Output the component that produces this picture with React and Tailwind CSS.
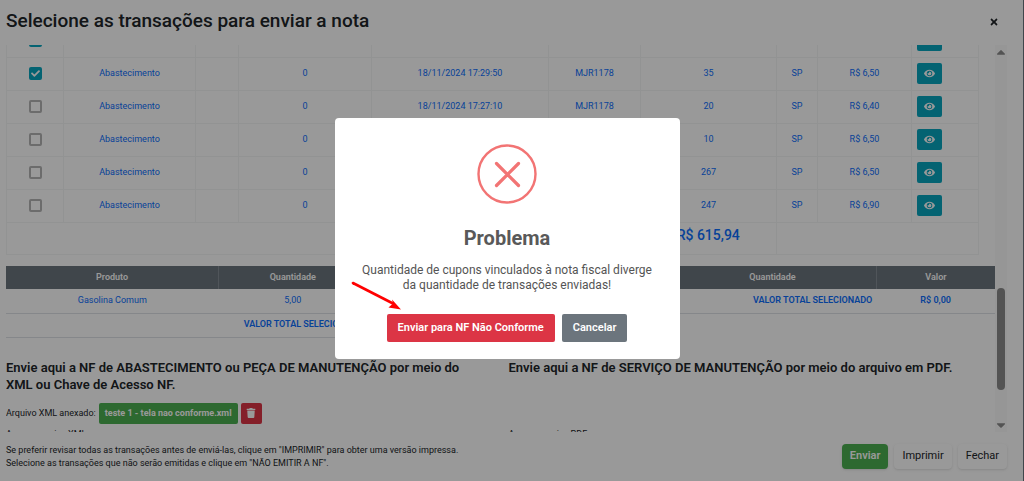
import React from 'react';
import { FaEye, FaTrash, FaCheck, FaTimes, FaCaretUp, FaCaretDown } from 'react-icons/fa';

const transactions = [
    { checked: true, type: '', quantity: '', date: '', plate: '', litres: '', state: '', price: '' },
    { checked: true, type: 'Abastecimento', quantity: '0', date: '18/11/2024 17:29:50', plate: 'MJR1178', litres: '35', state: 'SP', price: 'R$ 6,50' },
    { checked: false, type: 'Abastecimento', quantity: '0', date: '18/11/2024 17:27:10', plate: 'MJR1178', litres: '20', state: 'SP', price: 'R$ 6,40' },
    { checked: false, type: 'Abastecimento', quantity: '0', date: '', plate: '', litres: '10', state: 'SP', price: 'R$ 6,50' },
    { checked: false, type: 'Abastecimento', quantity: '0', date: '', plate: '', litres: '267', state: 'SP', price: 'R$ 6,50' },
    { checked: false, type: 'Abastecimento', quantity: '0', date: '', plate: '', litres: '247', state: 'SP', price: 'R$ 6,90' },
];

function Checkbox({ checked, label }) {
    return (
        <span className="relative inline-flex align-middle">
            <input
                type="checkbox"
                defaultChecked={checked}
                aria-label={label}
                className="peer appearance-none w-[13px] h-[13px] rounded-xs border-2 border-[#b4b4b4] checked:border-[#08a5be] checked:bg-[#08a5be]"
            />
            <FaCheck className="hidden peer-checked:block absolute inset-0 m-auto text-white text-[9px] pointer-events-none" />
        </span>
    );
}

function TransactionsTable() {
    const cell = 'border border-[#f4f5f6] p-0 text-center';

    return (
        <div className="pr-4 -mt-[21px]">
            <table className="w-full table-fixed border-collapse text-[9px] text-[#0d6efd]">
                <colgroup>
                    <col className="w-[57px]" />
                    <col className="w-[132px]" />
                    <col className="w-[43px]" />
                    <col className="w-[133px]" />
                    <col className="w-[177px]" />
                    <col className="w-[92px]" />
                    <col className="w-[136px]" />
                    <col className="w-[41px]" />
                    <col className="w-[94px]" />
                    <col className="w-[67px]" />
                </colgroup>
                <tbody>
                    {transactions.map((item, index) => (
                        <tr key={index} className="h-[33px]">
                            <td className={cell}><Checkbox checked={item.checked} label={`Selecionar transação ${index + 1}`} /></td>
                            <td className={cell}>{item.type}</td>
                            <td className={cell}></td>
                            <td className={cell}>{item.quantity}</td>
                            <td className={cell}>{item.date}</td>
                            <td className={cell}>{item.plate}</td>
                            <td className={cell}>{item.litres}</td>
                            <td className={cell}>{item.state}</td>
                            <td className={cell}>{item.price}</td>
                            <td className="border border-[#f4f5f6] p-0 pl-[5px] pb-0.5">
                                <button className="flex items-center justify-center w-[25px] h-[21px] rounded-xs bg-[#08a5be] text-white text-[11px]" aria-label="Ver transação">
                                    <FaEye />
                                </button>
                            </td>
                        </tr>
                    ))}
                    <tr className="h-8">
                        <td colSpan={6} className="border border-r-0 border-[#f4f5f6] p-0"></td>
                        <td className="border border-l-0 border-[#f4f5f6] p-0 pt-0.5 align-top text-center text-sm font-medium whitespace-nowrap">R$ 615,94</td>
                        <td colSpan={3} className={cell}></td>
                    </tr>
                </tbody>
            </table>
        </div>
    );
}

function ProductsTable({ products, widths }) {
    return (
        <table className="flex-1 table-fixed text-[9px] text-[#0d6efd]">
            <thead>
                <tr className="h-[23px] bg-[#6c757d] text-white">
                    <th className={`${widths[0]} border-r border-[#868e96] p-0 font-semibold`}>Produto</th>
                    <th className={`${widths[1]} border-r border-[#868e96] p-0 font-semibold`}>Quantidade</th>
                    <th className={`${widths[2]} p-0 font-semibold`}>Valor</th>
                </tr>
            </thead>
            <tbody>
                {products.map((product) => (
                    <tr key={product.name} className="h-6 border-b border-[#dee2e6]">
                        <td className="p-0 text-center">{product.name}</td>
                        <td className="p-0 text-center">{product.quantity}</td>
                        <td></td>
                    </tr>
                ))}
                <tr className="h-6 border-b border-[#dee2e6] font-semibold">
                    <td colSpan={2} className="p-0 pr-1 text-right">VALOR TOTAL SELECIONADO</td>
                    <td className="p-0 text-center">R$ 0,00</td>
                </tr>
            </tbody>
        </table>
    );
}

function Uploads() {
    return (
        <div className="flex pt-[21px] text-[9px] leading-[13px] text-[#212529]">
            <section className="w-1/2 pr-6">
                <h2 className="text-[13px] leading-[17px] font-semibold">
                    Envie aqui a NF de ABASTECIMENTO ou PEÇA DE MANUTENÇÃO por meio do XML ou Chave de Acesso NF.
                </h2>
                <div className="flex items-center gap-[3px] mt-[10px]">
                    <span>Arquivo XML anexado:</span>
                    <button className="h-[21px] px-[6px] rounded-xs bg-[#4caf50] text-white font-bold">teste 1 - tela nao conforme.xml</button>
                    <button className="flex items-center justify-center w-[21px] h-[21px] rounded-xs bg-[#dc3545] text-white text-[10px]" aria-label="Remover arquivo">
                        <FaTrash />
                    </button>
                </div>
                <p className="mt-1">Anexar arquivo XML:</p>
            </section>
            <section className="w-1/2 pl-2">
                <h2 className="text-[13px] leading-[17px] font-semibold">
                    Envie aqui a NF de SERVIÇO DE MANUTENÇÃO por meio do arquivo em PDF.
                </h2>
                <p className="mt-[52px]">Anexar arquivo PDF:</p>
            </section>
        </div>
    );
}

function Scrollbar() {
    return (
        <div className="flex flex-col items-center w-3 bg-[#fafafa] text-[#8b8b8b] text-sm" aria-hidden="true">
            <FaCaretUp />
            <div className="flex-1 flex flex-col justify-end w-2 pb-7">
                <div className="h-[102px] rounded-full bg-[#8b8b8b]"></div>
            </div>
            <FaCaretDown />
        </div>
    );
}

function ProblemDialog() {
    return (
        <div className="fixed inset-0 flex items-center justify-center bg-black/40 pr-2.5 pb-1">
            <div role="dialog" aria-labelledby="problem-title" className="relative w-[345px] rounded-sm bg-white px-4 pt-[26px] pb-[17px] text-center text-[#545454]">
                <svg viewBox="0 0 60 60" className="w-[60px] h-[60px] mx-auto" fill="none" stroke="#f27474" aria-hidden="true">
                    <circle cx="30" cy="30" r="28.5" strokeWidth="2.4" />
                    <path d="M19.5 19.5l22 22M41.5 19.5l-22 22" strokeWidth="3.2" strokeLinecap="round" />
                </svg>
                <h2 id="problem-title" className="mt-5 text-xl leading-7 font-bold text-[#595959]">Problema</h2>
                <p className="mt-[11px] text-xs leading-[15px]">
                    Quantidade de cupons vinculados à nota fiscal diverge
                    <br />
                    da quantidade de transações enviadas!
                </p>
                <div className="flex justify-center gap-[7px] mt-[21px] text-[11px] font-semibold text-white">
                    <button className="h-7 px-[11px] rounded-xs bg-[#dc3545]">Enviar para NF Não Conforme</button>
                    <button className="h-7 px-[11px] rounded-xs bg-[#6c757d]">Cancelar</button>
                </div>
                <svg viewBox="0 0 52 30" className="absolute left-[16px] top-[163px] w-[52px] h-[30px]" aria-hidden="true">
                    <path d="M2 2L42 22.5" stroke="#ff0000" strokeWidth="2.6" strokeLinecap="round" />
                    <path d="M50 28.5L37.500 26.500L42 22.500L41 18.500z" fill="#ff0000" />
                </svg>
            </div>
        </div>
    );
}

export default function App() {
    return (
        <div className="flex flex-col h-screen bg-white border-r border-[#6c757d] font-[Roboto,sans-serif]">
            <header className="flex items-center justify-between h-[45px] shrink-0 pl-1.5 pr-6 pb-0.5 text-[#212529]">
                <h1 className="text-[19px] font-medium">Selecione as transações para enviar a nota</h1>
                <button className="text-[10px]" aria-label="Fechar janela"><FaTimes /></button>
            </header>

            <main className="flex flex-1 min-h-0 pl-1.5 pr-4">
                <div className="flex-1 overflow-hidden">
                    <TransactionsTable />
                    <div className="flex items-start mt-[11px]">
                        <ProductsTable
                            products={[{ name: 'Gasolina Comum', quantity: '5,00' }]}
                            widths={['w-[43%]', 'w-[30%]', 'w-[27%]']}
                        />
                        <ProductsTable products={[]} widths={['w-[34%]', 'w-[42%]', 'w-[24%]']} />
                    </div>
                    <Uploads />
                </div>
                <Scrollbar />
            </main>

            <footer className="flex items-center justify-between h-[49px] shrink-0 pl-1.5 pr-4 text-[#212529]">
                <p className="text-[9px] leading-[13px]">
                    Se preferir revisar todas as transações antes de enviá-las, clique em "IMPRIMIR" para obter uma versão impressa.
                    <br />
                    Selecione as transações que não serão emitidas e clique em "NÃO EMITIR A NF".
                </p>
                <div className="flex gap-1.5 text-[11px]">
                    <button className="h-[25px] px-2 rounded-sm bg-[#4caf50] text-white font-semibold shadow">Enviar</button>
                    <button className="h-[25px] px-2 rounded-sm bg-white shadow">Imprimir</button>
                    <button className="h-[25px] px-2 rounded-sm bg-white shadow">Fechar</button>
                </div>
            </footer>

            <ProblemDialog />
        </div>
    );
}
